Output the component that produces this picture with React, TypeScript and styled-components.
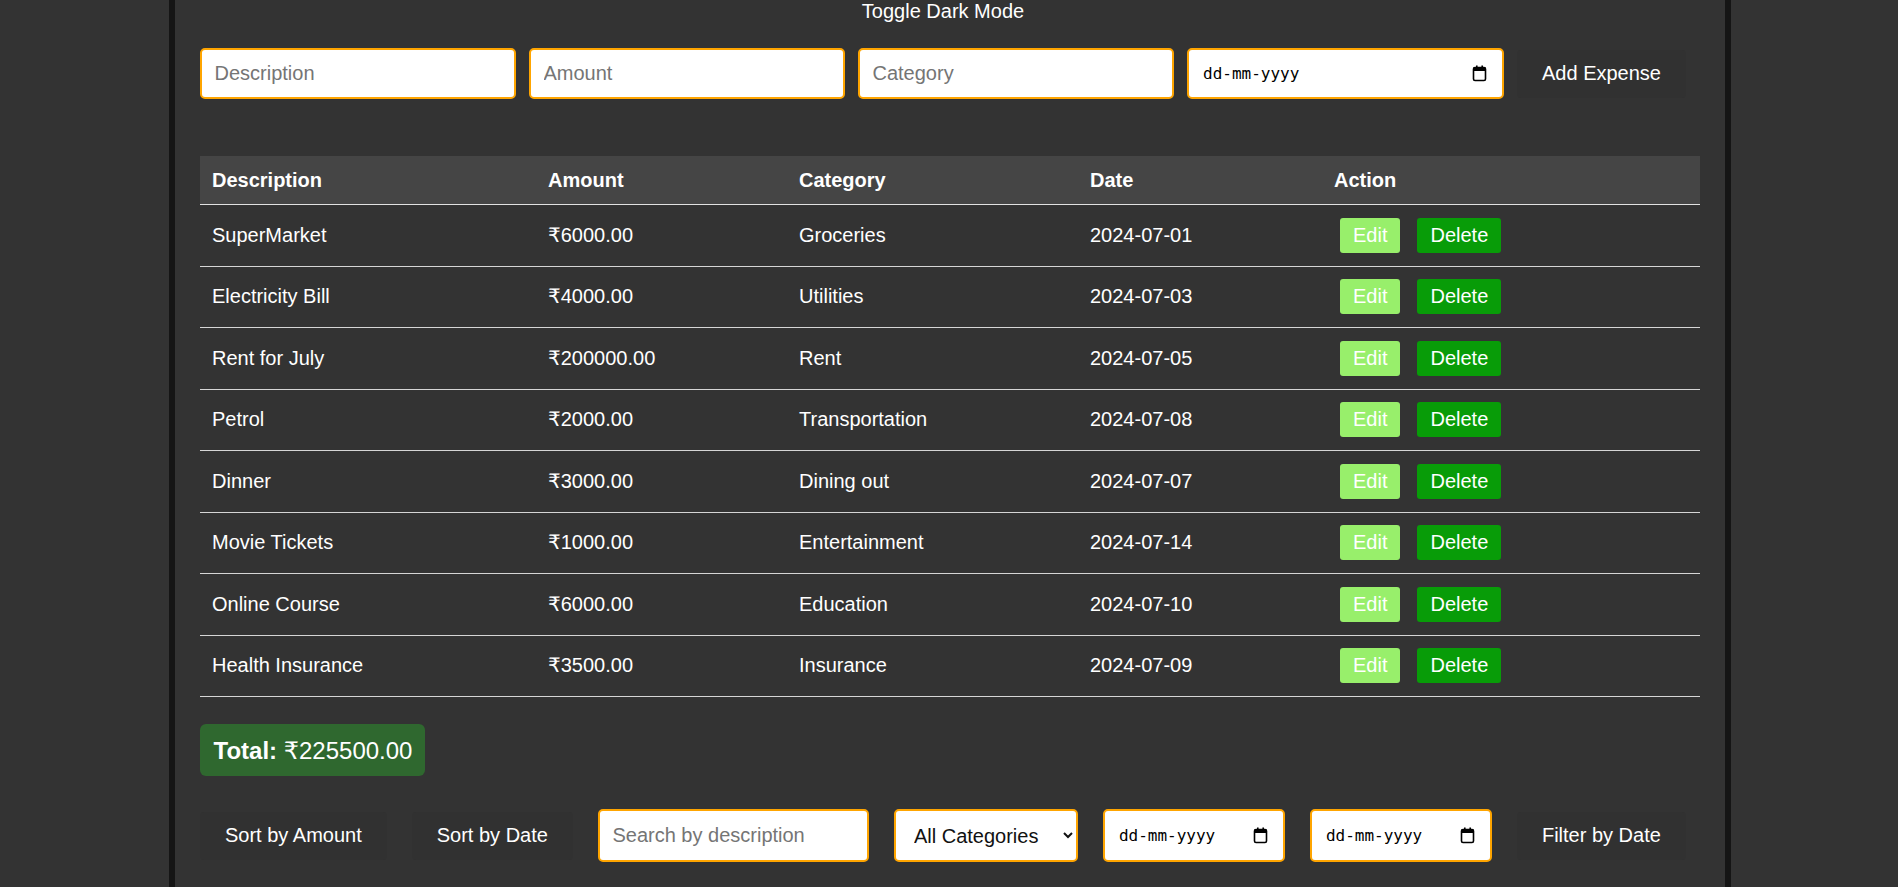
import React from "react";
import styled, { createGlobalStyle } from "styled-components";

const Global = createGlobalStyle`
  html, body { margin: 0; padding: 0; background: #333333; }
  body { font-family: "Liberation Sans", Arial, "DejaVu Sans", sans-serif; color: #ffffff; overflow: hidden; padding-left: 2px; }
  * { box-sizing: border-box; }
`;

const Page = styled.div`
  width: 1562px;
  min-height: 100vh;
  margin: 0 auto;
  padding: 0 25px;
  background: #333333;
  border-left: 6px solid #151515;
  border-right: 6px solid #151515;
`;

const ToggleBar = styled.div`
  display: flex;
  justify-content: center;
  padding-right: 14px;
`;

const PlainButton = styled.button`
  background: #313131;
  color: #ffffff;
  border: none;
  border-radius: 4px;
  font-family: "Liberation Sans", Arial, sans-serif;
  font-size: 20px;
  line-height: 23px;
  padding: 12.5px 25px;
  cursor: pointer;
  white-space: nowrap;
`;

const ToggleButton = styled(PlainButton)`
  background: transparent;
  padding: 0 25px 12.5px;
`;

const Row = styled.div<{ $gap: number; $top: number }>`
  display: flex;
  align-items: center;
  gap: ${(p) => p.$gap}px;
  margin-top: ${(p) => p.$top}px;
`;

const Field = styled.input<{ $w: number; $h: number }>`
  width: ${(p) => p.$w}px;
  height: ${(p) => p.$h}px;
  border: 2.5px solid #ffa500;
  border-radius: 5px;
  background: #ffffff;
  padding: 0 12.5px;
  font-family: "Liberation Sans", Arial, sans-serif;
  font-size: 20px;
  color: #111;
  outline: none;
  &::placeholder { color: #757575; }
`;

const Select = styled.select`
  width: 184px;
  height: 53px;
  border: 2.5px solid #ffa500;
  border-radius: 5px;
  background: #ffffff;
  padding: 0 10px 0 14px;
  font-family: "Liberation Sans", Arial, sans-serif;
  font-size: 20px;
  color: #111;
  outline: none;
`;

const DateBox = styled.label<{ $w: number; $h: number }>`
  width: ${(p) => p.$w}px;
  height: ${(p) => p.$h}px;
  border: 2.5px solid #ffa500;
  border-radius: 5px;
  background: #ffffff;
  display: flex;
  align-items: center;
  justify-content: space-between;
  padding: 0 15px 0 14px;
  flex-shrink: 0;
`;

const DateText = styled.span`
  font-family: "DejaVu Sans Mono", "Liberation Mono", monospace;
  font-size: 16px;
  color: #000;
`;

const Table = styled.table`
  width: 1500px;
  margin-top: 57px;
  border-collapse: collapse;
  table-layout: fixed;
`;

const Th = styled.th`
  background: #454545;
  text-align: left;
  font-size: 20px;
  line-height: 23px;
  font-weight: bold;
  padding: 12.5px 12px;
  border-bottom: 1.5px solid #e2e2e2;
`;

const Td = styled.td`
  text-align: left;
  font-size: 20px;
  line-height: 23px;
  padding: 12.5px 12px;
  border-bottom: 1px solid #d6d6d6;
  height: 61.5px;
`;

const Actions = styled.div`
  display: flex;
  gap: 17px;
  margin-left: 6px;
`;

const SmallButton = styled.button<{ $bg: string }>`
  background: ${(p) => p.$bg};
  color: #ffffff;
  border: none;
  border-radius: 3px;
  font-family: "Liberation Sans", Arial, sans-serif;
  font-size: 20px;
  line-height: 23px;
  padding: 6px 13px;
  cursor: pointer;
`;

const TotalWrap = styled.div`
  margin-top: 27px;
  display: flex;
`;

const TotalBox = styled.div`
  background: #2f682f;
  border-radius: 6px;
  padding: 12.5px 13px 12.5px 13.5px;
  font-size: 24px;
  line-height: 27px;
  color: #ffffff;
`;

const Bold = styled.strong`
  font-weight: bold;
`;

const CalendarIcon = () => (
  <svg width="15" height="17" viewBox="0 0 15 17" aria-hidden="true">
    <rect x="1.5" y="2.5" width="12" height="13" rx="1.5" fill="none" stroke="#000" strokeWidth="1.6" />
    <rect x="1.5" y="2.5" width="12" height="3.5" fill="#000" />
    <rect x="4" y="0.5" width="1.6" height="3" fill="#000" />
    <rect x="9.4" y="0.5" width="1.6" height="3" fill="#000" />
  </svg>
);

const DateField = ({ w, h }: { w: number; h: number }) => (
  <DateBox $w={w} $h={h}>
    <DateText>dd-mm-yyyy</DateText>
    <CalendarIcon />
  </DateBox>
);

const expenses = [
  ["SuperMarket", "₹6000.00", "Groceries", "2024-07-01"],
  ["Electricity Bill", "₹4000.00", "Utilities", "2024-07-03"],
  ["Rent for July", "₹200000.00", "Rent", "2024-07-05"],
  ["Petrol", "₹2000.00", "Transportation", "2024-07-08"],
  ["Dinner", "₹3000.00", "Dining out", "2024-07-07"],
  ["Movie Tickets", "₹1000.00", "Entertainment", "2024-07-14"],
  ["Online Course", "₹6000.00", "Education", "2024-07-10"],
  ["Health Insurance", "₹3500.00", "Insurance", "2024-07-09"],
];

export default function App() {
  return (
    <>
      <Global />
      <Page>
        <ToggleBar>
          <ToggleButton>Toggle Dark Mode</ToggleButton>
        </ToggleBar>

        <Row $gap={13} $top={12.5}>
          <Field $w={316} $h={51} placeholder="Description" />
          <Field $w={316} $h={51} placeholder="Amount" />
          <Field $w={316} $h={51} placeholder="Category" />
          <DateField w={317} h={51} />
          <PlainButton>Add Expense</PlainButton>
        </Row>

        <Table>
          <colgroup>
            <col style={{ width: 336 }} />
            <col style={{ width: 251 }} />
            <col style={{ width: 291 }} />
            <col style={{ width: 244 }} />
            <col style={{ width: 378 }} />
          </colgroup>
          <thead>
            <tr>
              <Th>Description</Th>
              <Th>Amount</Th>
              <Th>Category</Th>
              <Th>Date</Th>
              <Th>Action</Th>
            </tr>
          </thead>
          <tbody>
            {expenses.map((e, i) => (
              <tr key={i}>
                <Td>{e[0]}</Td>
                <Td>{e[1]}</Td>
                <Td>{e[2]}</Td>
                <Td>{e[3]}</Td>
                <Td>
                  <Actions>
                    <SmallButton $bg="#98ef6b">Edit</SmallButton>
                    <SmallButton $bg="#089c08">Delete</SmallButton>
                  </Actions>
                </Td>
              </tr>
            ))}
          </tbody>
        </Table>

        <TotalWrap>
          <TotalBox>
            <Bold>Total:</Bold> ₹225500.00
          </TotalBox>
        </TotalWrap>

        <Row $gap={25} $top={33}>
          <PlainButton>Sort by Amount</PlainButton>
          <PlainButton>Sort by Date</PlainButton>
          <Field $w={271} $h={53} placeholder="Search by description" />
          <Select defaultValue="all">
            <option value="all">All Categories</option>
          </Select>
          <DateField w={182} h={53} />
          <DateField w={182} h={53} />
          <PlainButton>Filter by Date</PlainButton>
        </Row>
      </Page>
    </>
  );
}
